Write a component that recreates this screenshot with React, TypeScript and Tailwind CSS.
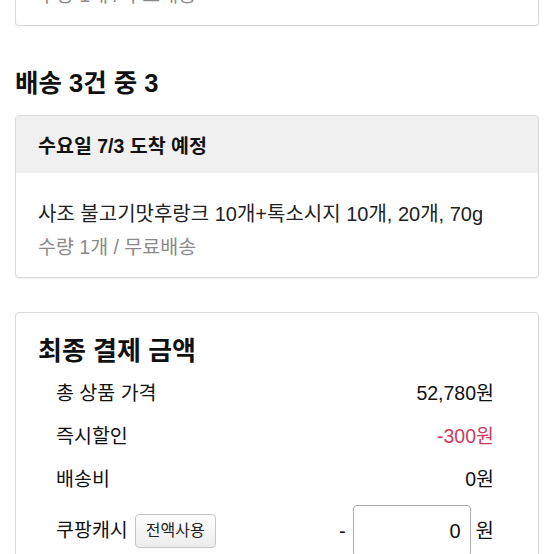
const font = "font-['Liberation_Sans','Noto_Sans_CJK_KR',sans-serif]"

const rows = [
  { label: '총 상품 가격', value: '52,780원', red: false },
  { label: '즉시할인', value: '-300원', red: true },
  { label: '배송비', value: '0원', red: false },
]

const App = () => {
  return (
    <div className={`${font} h-[554px] overflow-hidden bg-white px-[15px] text-[#111]`}>
      {/* previous shipment card, scrolled mostly out of view */}
      <div className="-mt-[17px] rounded-b-[4px] border border-t-0 border-[#d9d9d9] px-[22px] pb-[18px] shadow-[0_1px_2px_rgba(0,0,0,0.06)]">
        <p className="text-[19.5px] leading-6 text-[#8a8a8a]">수량 1개 / 무료배송</p>
      </div>

      <h2 className="mt-[41px] text-[25.5px] font-bold leading-8">배송 3건 중 3</h2>

      <div className="mt-4 overflow-hidden rounded-[4px] border border-[#d9d9d9] shadow-[0_1px_2px_rgba(0,0,0,0.06)]">
        <div className="flex h-[57px] items-center bg-[#f0f0f0] px-[22px] pt-[5px]">
          <span className="text-[19.5px] font-bold">수요일 7/3 도착 예정</span>
        </div>
        <div className="px-[22px] pt-[29px] pb-[18px]">
          <p className="text-[20px] leading-6 text-[#222]">
            사조 불고기맛후랑크 10개+톡소시지 10개, 20개, 70g
          </p>
          <p className="mt-[9px] text-[19.5px] leading-6 text-[#8a8a8a]">수량 1개 / 무료배송</p>
        </div>
      </div>

      <div className="mt-[34px] rounded-[4px] border border-[#d9d9d9] px-[22px] pt-[22px] pb-6 shadow-[0_1px_2px_rgba(0,0,0,0.06)]">
        <h3 className="text-[26px] font-bold leading-8">최종 결제 금액</h3>
        <div className="mt-[5px] pl-[18px] pr-[22px] text-[19.5px]">
          {rows.map((r) => (
            <div key={r.label} className="flex h-[43px] items-center justify-between">
              <span>{r.label}</span>
              <span className={r.red ? 'text-[#cf3a62]' : ''}>{r.value}</span>
            </div>
          ))}
          <div className="mt-1 flex h-[52px] items-center justify-between">
            <div className="flex items-center">
              <span>쿠팡캐시</span>
              <button className="ml-[7px] h-[34px] rounded-[4px] border border-[#c6c6c6] bg-gradient-to-b from-white to-[#ececec] px-[10px] text-[16px] text-[#222]">
                전액사용
              </button>
            </div>
            <div className="flex items-center text-[20px]">
              <span className="mr-[7px]">-</span>
              <div className="flex h-[52px] w-[118px] items-center justify-end rounded-[4px] border border-[#a9a9a9] pr-[9px]">
                0
              </div>
              <span className="ml-[5px]">원</span>
            </div>
          </div>
        </div>
      </div>
    </div>
  )
}

export default App
